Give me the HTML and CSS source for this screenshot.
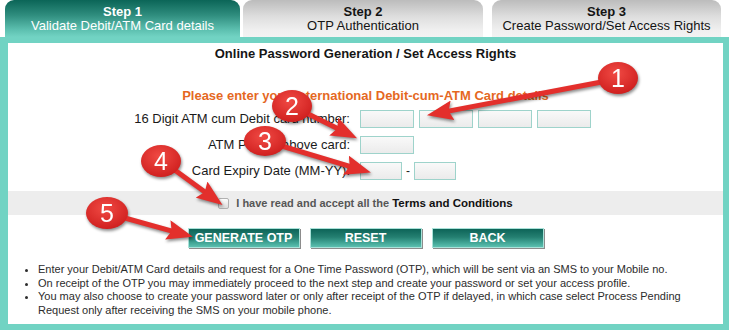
FILE: index.html
```html
<!DOCTYPE html>
<html>
<head>
<meta charset="utf-8">
<title>Online Password Generation</title>
<link rel="stylesheet" href="styles.css">
</head>
<body>
<div class="page">
  <div class="tabs">
    <div class="tab active"><b>Step 1</b><span>Validate Debit/ATM Card details</span></div>
    <div class="tab"><b>Step 2</b><span>OTP Authentication</span></div>
    <div class="tab last"><b>Step 3</b><span>Create Password/Set Access Rights</span></div>
  </div>
  <div class="panel">
    <h1 class="title">Online Password Generation / Set Access Rights</h1>
    <p class="prompt">Please enter your International Debit-cum-ATM Card details</p>
    <div class="form">
      <label class="lbl">16 Digit ATM cum Debit card number:</label>
      <div class="fields"><input class="box w54" type="text"><input class="box w54" type="text"><input class="box w54" type="text"><input class="box w54" type="text"></div>
      <label class="lbl">ATM PIN for above card:</label>
      <div class="fields"><input class="box w54" type="password"></div>
      <label class="lbl">Card Expiry Date (MM-YY):</label>
      <div class="fields"><input class="box w42" type="text"><span class="dash">-</span><input class="box w42" type="text"></div>
    </div>
    <div class="agree"><span class="cb"></span><span class="agree-text">I have read and accept all the <b>Terms and Conditions</b></span></div>
    <div class="buttons">
      <button class="btn" type="button">GENERATE OTP</button>
      <button class="btn" type="button">RESET</button>
      <button class="btn" type="button">BACK</button>
    </div>
    <ul class="notes">
      <li>Enter your Debit/ATM Card details and request for a One Time Password (OTP), which will be sent via an SMS to your Mobile no.</li>
      <li>On receipt of the OTP you may immediately proceed to the next step and create your password or set your access profile.</li>
      <li>You may also choose to create your password later or only after receipt of the OTP if delayed, in which case select Process Pending Request only after receiving the SMS on your mobile phone.</li>
    </ul>
  </div>
  <svg class="callouts" width="729" height="330" viewBox="0 0 729 330">
    <defs>
      <marker id="ah" viewBox="0 0 26 20" refX="11" refY="10" markerWidth="26" markerHeight="20" orient="auto" markerUnits="userSpaceOnUse">
        <path d="M0 0 L26 10 L0 20 L4 10 Z" fill="#e32f2c"/>
      </marker>
      <radialGradient id="dot" cx="45%" cy="35%" r="65%">
        <stop offset="0" stop-color="#f04a44"/>
        <stop offset="1" stop-color="#d0201f"/>
      </radialGradient>
    </defs>
    <g stroke="#e32f2c" stroke-width="5" stroke-linecap="round" fill="none">
      <line x1="612" y1="80" x2="441.7" y2="112.4" marker-end="url(#ah)"/>
      <line x1="292" y1="106" x2="343.6" y2="131.5" marker-end="url(#ah)"/>
      <line x1="265" y1="141" x2="356.5" y2="168.3" marker-end="url(#ah)"/>
      <line x1="161" y1="160" x2="210.4" y2="196.1" marker-end="url(#ah)"/>
      <line x1="107" y1="213" x2="178.4" y2="232.8" marker-end="url(#ah)"/>
    </g>
    <g fill="url(#dot)">
      <ellipse cx="618" cy="78" rx="20" ry="16"/>
      <ellipse cx="292" cy="106" rx="20" ry="16"/>
      <ellipse cx="265" cy="141" rx="21" ry="15"/>
      <ellipse cx="161" cy="161" rx="20" ry="16"/>
      <ellipse cx="107" cy="213" rx="21" ry="16"/>
    </g>
    <g class="num">
      <text x="618" y="87">1</text>
      <text x="292" y="115">2</text>
      <text x="265" y="150">3</text>
      <text x="161" y="170">4</text>
      <text x="107" y="222">5</text>
    </g>
  </svg>
</div>
</body>
</html>
```

FILE: styles.css
```css
body {
  margin: 0;
  background: #ffffff;
  font-family: "Liberation Sans", Arial, sans-serif;
}

.page {
  position: relative;
  width: 729px;
  height: 330px;
  overflow: hidden;
}

.tabs {
  display: grid;
  grid-template-columns: 235px 240px 235px;
  column-gap: 3px;
  padding-left: 5px;
  height: 37px;
}

.tab {
  display: flex;
  flex-direction: column;
  align-items: center;
  justify-content: center;
  border-radius: 9px 9px 0 0;
  background: linear-gradient(#bcbcbc, #dedede 45%, #efefef 80%, #f3f3f3);
  color: #141414;
  font-size: 13px;
  line-height: 14px;
}

.tab b {
  font-weight: bold;
}

.tab.active {
  background: linear-gradient(#0b6557, #2e8c7d 40%, #5cbfaf 80%, #72d3c3);
  color: #ffffff;
}

.tab.last {
  margin-left: 6px;
}

.panel {
  box-sizing: border-box;
  height: 293px;
  border: 6px solid #71d3c3;
  border-left-width: 8px;
  background: #ffffff;
}

.title {
  margin: 0;
  padding-top: 4px;
  font-size: 13px;
  line-height: 14px;
  font-weight: bold;
  text-align: center;
  color: #151515;
}

.prompt {
  margin: 28px 0 0;
  font-size: 13px;
  line-height: 14px;
  font-weight: bold;
  text-align: center;
  color: #e5681f;
}

.form {
  display: grid;
  grid-template-columns: 342px auto;
  column-gap: 10px;
  row-gap: 8px;
  margin-top: 7px;
}

.lbl {
  align-self: center;
  text-align: right;
  font-size: 13px;
  line-height: 14px;
  color: #1a1a1a;
}

.fields {
  display: flex;
  align-items: center;
  gap: 5px;
  height: 18px;
}

.box {
  box-sizing: border-box;
  height: 18px;
  margin: 0;
  padding: 0 3px;
  border: 1px solid #9ed3cb;
  background: linear-gradient(#f9f9f9, #ebebeb);
  font-size: 11px;
}

.w54 {
  width: 54px;
}

.w42 {
  width: 42px;
}

.dash {
  font-size: 12px;
  color: #222;
  margin: 0 -1px;
}

.agree {
  display: flex;
  align-items: center;
  justify-content: center;
  height: 24px;
  margin-top: 11px;
  background: #ededed;
}

.cb {
  box-sizing: border-box;
  width: 11px;
  height: 11px;
  margin-right: 7px;
  border: 1px solid #b1b1b1;
  border-radius: 2px;
  background: linear-gradient(#fdfdfd, #dcdcdc);
}

.agree-text {
  font-size: 11px;
  font-weight: bold;
  color: #565656;
}

.agree-text b {
  font-size: 11.5px;
  color: #111111;
}

.buttons {
  display: flex;
  justify-content: center;
  gap: 10px;
  margin-top: 13px;
}

.btn {
  box-sizing: border-box;
  width: 112px;
  height: 20px;
  padding: 0;
  border: 1px solid #a9e2d9;
  background: linear-gradient(#0d6458, #247f71 45%, #45a999 80%, #5cc0b0);
  box-shadow: 1px 1px 0 #8c8c8c;
  color: #ffffff;
  font-family: "Liberation Sans", Arial, sans-serif;
  font-size: 12.5px;
  font-weight: bold;
}

.notes {
  margin: 15px 0 0;
  padding-left: 30px;
  padding-right: 8px;
  font-size: 11px;
  line-height: 13.7px;
  color: #2c2c2c;
}

.callouts {
  position: absolute;
  left: 0;
  top: 0;
  filter: drop-shadow(1px 2px 1.5px rgba(0, 0, 0, 0.45));
}

.num text {
  fill: #ffffff;
  font-family: "Liberation Sans", Arial, sans-serif;
  font-size: 25px;
  text-anchor: middle;
}
```
